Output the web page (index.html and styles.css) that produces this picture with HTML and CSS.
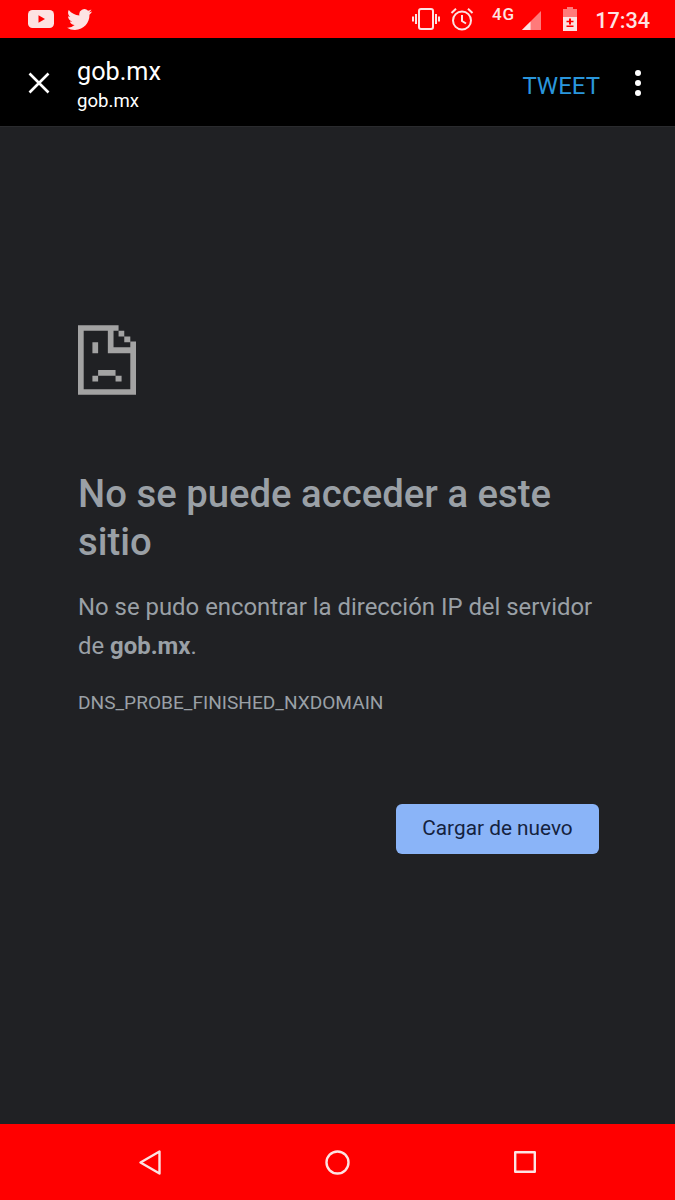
FILE: index.html
```html
<!DOCTYPE html>
<html lang="es">
<head>
<meta charset="utf-8">
<title>gob.mx</title>
<link rel="stylesheet" href="styles.css">
</head>
<body>
<div class="screen">
  <header class="status">
    <div class="status-left">
      <svg class="i-yt" viewBox="0 0 26 18"><rect width="26" height="18" rx="4.5" fill="#fde3e3"/><path d="M10.500 5.200 17 9l-6.500 3.800z" fill="#f00"/></svg>
      <svg class="i-tw" viewBox="0 0 24 20"><path fill="#fde3e3" d="M24 2.400c-.9.400-1.800.650-2.800.800 1-.6 1.800-1.550 2.150-2.700-.95.550-2 .950-3.100 1.200A4.900 4.900 0 0 0 11.900 6.150C7.800 5.950 4.200 4 1.700.9.400 3.150 1 6 3.200 7.500c-.8 0-1.550-.25-2.200-.6 0 2.350 1.650 4.400 3.950 4.850-.7.200-1.500.250-2.200.1.600 2 2.450 3.400 4.600 3.450A9.900 9.900 0 0 1 0 17.800 14 14 0 0 0 7.550 20c9.150 0 14.300-7.700 14-14.600.95-.7 1.800-1.600 2.450-3z"/></svg>
    </div>
    <div class="status-right">
      <svg class="i-vib" viewBox="0 0 28 22" fill="none" stroke="#fde3e3" stroke-width="2"><rect x="7" y="1" width="14" height="20" rx="2"/><path d="M4 6v10M1 8.500v5M24 6v10M27 8.500v5"/></svg>
      <svg class="i-alarm" viewBox="0 0 24 24" fill="none" stroke="#fde3e3" stroke-width="2"><circle cx="12" cy="13.500" r="9"/><path d="M12 8v6l4 2.500M1.500 6 6 1.800M22.500 6 18 1.800"/></svg>
      <span class="net">4G</span>
      <svg class="i-signal" viewBox="0 0 20 20"><path d="M20 0v20H0z" fill="#ff7a7a"/><path d="M9 11v9H0z" fill="#fde3e3"/></svg>
      <svg class="i-batt" viewBox="0 0 14 24"><path d="M4 0h6v2h4v22H0V2h4z" fill="#ff7a7a"/><path d="M0 10h14v14H0z" fill="#fde3e3"/><path d="M6 11.500h2v2.200h2.500v1.600H8v2.200H6v-2.200H3.500v-1.600H6zM3.500 18.500h7v1.500h-7z" fill="#f00"/></svg>
      <span class="clock">17:34</span>
    </div>
  </header>
  <nav class="toolbar">
    <svg class="i-close" viewBox="0 0 22 22" fill="none" stroke="#fff" stroke-width="2.600"><path d="M1.500 1.500l19 19M20.500 1.500l-19 19"/></svg>
    <div class="titles">
      <div class="title">gob.mx</div>
      <div class="subtitle">gob.mx</div>
    </div>
    <span class="tweet">TWEET</span>
    <div class="dots"><i></i><i></i><i></i></div>
  </nav>
  <main class="page">
    <svg class="i-sad" viewBox="54 46 173 208"><path fill="#a3a3a3" fill-rule="evenodd" d="M54 46h121v17h-15v49h50v-17h17v159H54zM71 63v174h139V130h-67V63z"/><path fill="#a3a3a3" d="M175 63h17v17h-17zM192 80h18v17h-18zM97 97h17v33H97zM114 180h52v17h-52zM97 197h17v17H97zM166 197h18v17h-18z"/></svg>
    <h1 class="heading">No se puede acceder a este sitio</h1>
    <p class="desc">No se pudo encontrar la dirección IP del servidor de <strong>gob.mx</strong>.</p>
    <p class="code">DNS_PROBE_FINISHED_NXDOMAIN</p>
    <div class="actions"><button class="reload">Cargar de nuevo</button></div>
  </main>
  <footer class="navbar">
    <svg class="i-back" viewBox="0 0 22 25" fill="none" stroke="#fde3e3" stroke-width="2.400" stroke-linejoin="round"><path d="M20.500 1.500v22L1.500 12.500z"/></svg>
    <svg class="i-home" viewBox="0 0 25 25" fill="none" stroke="#fde3e3" stroke-width="2.400"><circle cx="12.500" cy="12.500" r="11"/></svg>
    <svg class="i-recent" viewBox="0 0 22 22" fill="none" stroke="#fde3e3" stroke-width="2.400" stroke-linejoin="round"><rect x="1.200" y="1.200" width="19.600" height="19.600"/></svg>
  </footer>
</div>
</body>
</html>
```

FILE: styles.css
```css
* { box-sizing: border-box; }
html, body { margin: 0; padding: 0; }
body { font-family: Roboto, "Liberation Sans", sans-serif; background: #202124; }
.screen { width: 675px; height: 1200px; display: flex; flex-direction: column; overflow: hidden; }

.status { height: 38px; flex: none; background: #f00; display: flex; align-items: center; justify-content: space-between; padding: 0 25px 0 28px; color: #fde3e3; }
.status-left { display: flex; align-items: center; gap: 13px; }
.i-yt { width: 26px; height: 18px; display: block; }
.i-tw { width: 25px; height: 21px; display: block; }
.status-right { display: flex; align-items: center; }
.i-vib { width: 28px; height: 22px; display: block; margin-right: 10px; }
.i-alarm { width: 24px; height: 24px; display: block; margin-right: 18px; }
.net { font-size: 17px; font-weight: 500; line-height: 16px; letter-spacing: 1px; margin-right: 7px; margin-bottom: 10px; }
.i-signal { width: 19px; height: 19px; display: block; margin-right: 22px; margin-top: 3px; }
.i-batt { width: 14px; height: 24px; display: block; margin-right: 18px; }
.clock { font-size: 21.600px; font-weight: 500; line-height: 24px; margin-top: 3px; }

.toolbar { height: 89px; flex: none; background: #000; border-bottom: 1px solid #2a2b2e; display: flex; align-items: center; padding: 0 34px 0 28px; }
.i-close { width: 22px; height: 22px; display: block; margin-right: 27px; margin-top: 1px; }
.titles { flex: 1; color: #fff; margin-top: 8px; }
.title { font-size: 25.200px; line-height: 30px; margin-top: -2px; }
.subtitle { font-size: 18.600px; line-height: 24px; margin-top: 2px; }
.tweet { color: #2a96dc; font-size: 24px; line-height: 30px; margin-right: 35px; margin-top: 8px; }
.dots { display: flex; flex-direction: column; gap: 4px; margin-top: 1px; }
.dots i { width: 6px; height: 6px; border-radius: 50%; background: #fff; display: block; }

.page { flex: 1; padding: 198px 76px 0 78px; color: #9aa0a6; }
.i-sad { width: 58px; height: 70px; display: block; }
.heading { margin: 75px 0 0; font-size: 38.300px; line-height: 48px; font-weight: 500; color: #9aa0a6; }
.desc { margin: 22px 0 0; font-size: 23.900px; line-height: 38.500px; }
.desc strong { font-weight: 700; }
.code { margin: 26px 0 0; font-size: 19.100px; line-height: 24px; }
.actions { display: flex; justify-content: flex-end; margin-top: 88.500px; }
.reload { width: 203px; height: 50px; border: 0; border-radius: 6px; background: #8ab4f8; color: #15233f; font: 400 20.800px Roboto, sans-serif; padding: 0 0 2px; }

.navbar { height: 76px; flex: none; background: #f00; display: flex; align-items: center; justify-content: space-between; padding: 0 139px; }
.i-back { width: 22px; height: 25px; display: block; }
.i-home { width: 25px; height: 25px; display: block; }
.i-recent { width: 22px; height: 22px; display: block; }
```
